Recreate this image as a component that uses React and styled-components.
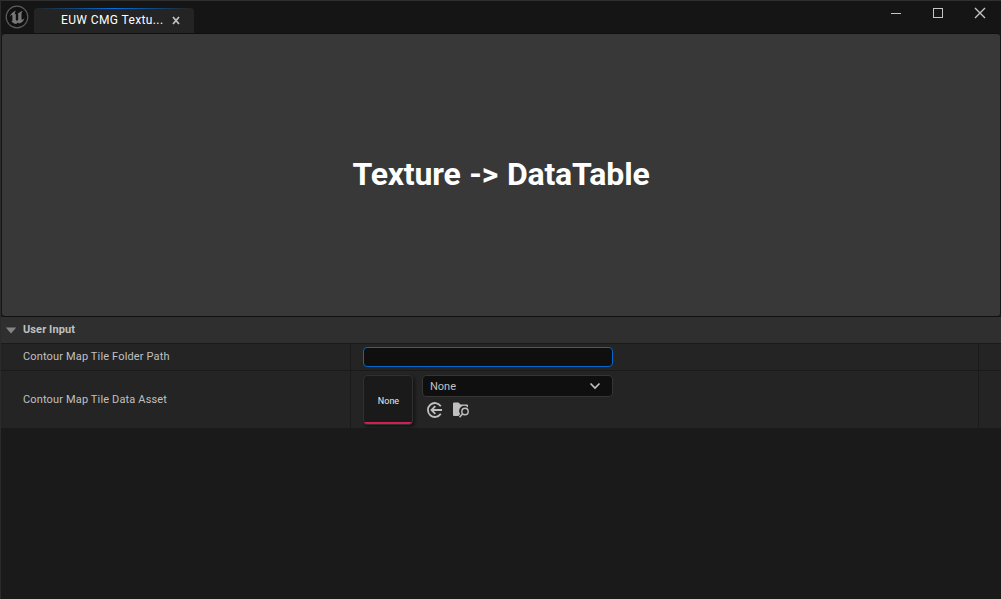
import React from "react";
import styled, { createGlobalStyle } from "styled-components";

const GlobalStyle = createGlobalStyle`
  * { box-sizing: border-box; }
  html, body { margin: 0; background: #151515; overflow: hidden; }
`;

const Window = styled.main`
  width: 1001px;
  height: 599px;
  display: flex;
  flex-direction: column;
  background: #1a1a1a;
  border-top: 1px solid #303030;
  border-left: 1px solid #2b2b2b;
  color: #c0c0c0;
  font-family: Roboto, "Liberation Sans", sans-serif;
  font-size: 11px;
  overflow: hidden;
`;

const TitleBar = styled.header`
  height: 32px;
  flex: none;
  display: flex;
  background: #151515;
`;

const Logo = styled.svg`
  width: 24px;
  height: 24px;
  margin: 4px 5px 0 4px;
`;

const Tab = styled.div`
  width: 160px;
  height: 25px;
  margin-top: 7px;
  padding: 0 13px 1px 27px;
  display: flex;
  align-items: center;
  justify-content: space-between;
  border-radius: 4px 4px 0 0;
  background:
    linear-gradient(90deg, #242424 2%, #0070e0 50%, #242424 98%) top / 100% 1px no-repeat,
    #242424;
  color: #fff;
  font-size: 12px;
  line-height: 24px;
  letter-spacing: 0.38px;
  white-space: nowrap;
`;

const TabClose = styled.svg`
  width: 9px;
  height: 9px;
`;

const Controls = styled.svg`
  width: 116px;
  height: 24px;
  margin-left: auto;
`;

const ActionButton = styled.button`
  height: 284px;
  flex: none;
  padding: 0 0 3px;
  border: 1px solid #0f0f0f;
  border-left-color: #151515;
  border-right-color: #151515;
  border-radius: 4px;
  background: #383838;
  color: #fff;
  font: bold 32px/38px Roboto, "Liberation Sans", sans-serif;
  letter-spacing: -0.18px;
  word-spacing: 1px;
`;

const SectionHeader = styled.h2`
  height: 26px;
  flex: none;
  display: flex;
  align-items: center;
  gap: 7px;
  margin: 0;
  padding: 0 0 1px 4px;
  background: #2f2f2f;
  font-size: 11px;
  font-weight: bold;
  letter-spacing: 0.1px;
`;

const Arrow = styled.svg`
  width: 11px;
  height: 7px;
  margin-top: 1px;
`;

const Row = styled.div`
  height: ${({ $height }) => $height}px;
  flex: none;
  display: grid;
  grid-template-columns: 350px 628px 1fr;
  border-top: 1px solid #1a1a1a;
  background: #242424;
`;

const Label = styled.div`
  display: flex;
  align-items: center;
  padding: 0 0 ${({ $lift }) => $lift}px 22px;
  border-right: 1px solid #1a1a1a;
  letter-spacing: 0.15px;
`;

const Value = styled.div`
  display: flex;
  align-items: flex-start;
  padding: ${({ $top }) => $top}px 0 0 12px;
  border-right: 1px solid #1a1a1a;
`;

const PathInput = styled.input`
  width: 250px;
  height: 20px;
  padding: 0 6px;
  border: 1px solid #0667cc;
  border-radius: 4px;
  outline: none;
  background: #0f0f0f;
  color: #c0c0c0;
`;

const Thumbnail = styled.div`
  width: 50px;
  height: 50px;
  margin-right: 9px;
  display: flex;
  align-items: center;
  justify-content: center;
  padding: 2px 0 0 1px;
  border: 1px solid #303030;
  border-radius: 4px;
  background: linear-gradient(#cf2056, #cf2056) bottom / 100% 2px no-repeat, #1a1a1a;
  box-shadow: 2px 2px 3px #151515;
  color: #e8e8e8;
  font-size: 9px;
`;

const AssetPicker = styled.div`
  display: flex;
  flex-direction: column;
`;

const Select = styled.div`
  width: 191px;
  height: 22px;
  display: flex;
  align-items: center;
  justify-content: space-between;
  padding: 0 11px 0 7px;
  border: 1px solid #353535;
  border-radius: 4px;
  background: #0f0f0f;
`;

const Chevron = styled.svg`
  width: 12px;
  height: 8px;
`;

const AssetActions = styled.div`
  display: flex;
  gap: 10px;
  padding: 5px 0 0 5px;
`;

const Icon = styled.svg`
  width: 16px;
  height: 16px;
`;

export default function App() {
  return (
    <>
      <GlobalStyle />
      <Window>
        <TitleBar>
          <Logo viewBox="0 0 24 24">
            <circle cx="12" cy="12" r="10.8" fill="#101010" stroke="#5c5c5c" strokeWidth="1.2" />
            <path
              fill="#777"
              d="M11.2 5.4C8.1 6.3 5.6 8.7 4.5 12.1c1.1-1.7 2-2.3 2.5-2.1.3.1.4.4.4.9v4.4c0 .8-.5 1.1-1.1 1 1.1 1.6 2.9 2.5 4.9 2.6l1.5-1.5 1.4 1.2c3-.9 4.7-2.8 5.4-5.6-.9 1-1.7 1.6-2.4 1.7-.4 0-.6-.2-.6-.6V8.6c0-1 .7-2 1.5-2.7-1.8.3-3.4 1.1-4.4 2.3-.2-.2-.6-.4-1.1-.4.5.3.7.7.7 1.2v5.9c-.5.5-1 .8-1.5.8-.6 0-.9-.4-.9-1.1V9c-.3-.1-.6.1-1 .4 0-1.7.4-3 1.4-4z"
            />
          </Logo>
          <Tab>
            <span>EUW CMG Textu...</span>
            <TabClose viewBox="0 0 9 9">
              <path d="M1 1l6 7m0-7l-6 7" stroke="#c0c0c0" strokeWidth="1.8" />
            </TabClose>
          </Tab>
          <Controls viewBox="885 1 116 24" fill="none" stroke="#c5c5c5">
            <path d="M891 13.5h10" />
            <rect x="933.5" y="8.5" width="9" height="9" />
            <path d="M975 8l10 10m0-10l-10 10" strokeWidth="1.4" />
          </Controls>
        </TitleBar>
        <ActionButton>Texture -&gt; DataTable</ActionButton>
        <SectionHeader>
          <Arrow viewBox="0 0 11 7">
            <path d="M.8.5h10.4L6 6.5z" fill="#858585" />
          </Arrow>
          User Input
        </SectionHeader>
        <Row $height={27}>
          <Label $lift={2}>Contour Map Tile Folder Path</Label>
          <Value $top={3}>
            <PathInput aria-label="Contour Map Tile Folder Path" />
          </Value>
          <span />
        </Row>
        <Row $height={58}>
          <Label $lift={1}>Contour Map Tile Data Asset</Label>
          <Value $top={4}>
            <Thumbnail>None</Thumbnail>
            <AssetPicker>
              <Select>
                None
                <Chevron viewBox="0 0 12 8">
                  <path d="M1.5 1.5L6 6l4.5-4.5" fill="none" stroke="#c0c0c0" strokeWidth="1.7" />
                </Chevron>
              </Select>
              <AssetActions>
                <Icon viewBox="0 0 16 16" fill="none" stroke="#c0c0c0" strokeWidth="1.8">
                  <path d="M13.8 4.2A7 7 0 1 0 13.8 11.8M15 8H4.5M8.3 4.2L4.5 8l3.8 3.8" />
                </Icon>
                <Icon viewBox="0 0 16 16">
                  <path
                    fill="#c0c0c0"
                    d="M0 1.5Q0 .5 1 .5h4.5l2 2H14q1 0 1 1v2.2A5 5 0 0 0 7.2 12L5.5 14H1q-1 0-1-1z"
                  />
                  <circle cx="12" cy="9.5" r="3.2" fill="none" stroke="#c0c0c0" strokeWidth="1.4" />
                  <path d="M9.7 11.8l-3.2 3.4" stroke="#c0c0c0" strokeWidth="1.6" />
                </Icon>
              </AssetActions>
            </AssetPicker>
          </Value>
          <span />
        </Row>
      </Window>
    </>
  );
}
